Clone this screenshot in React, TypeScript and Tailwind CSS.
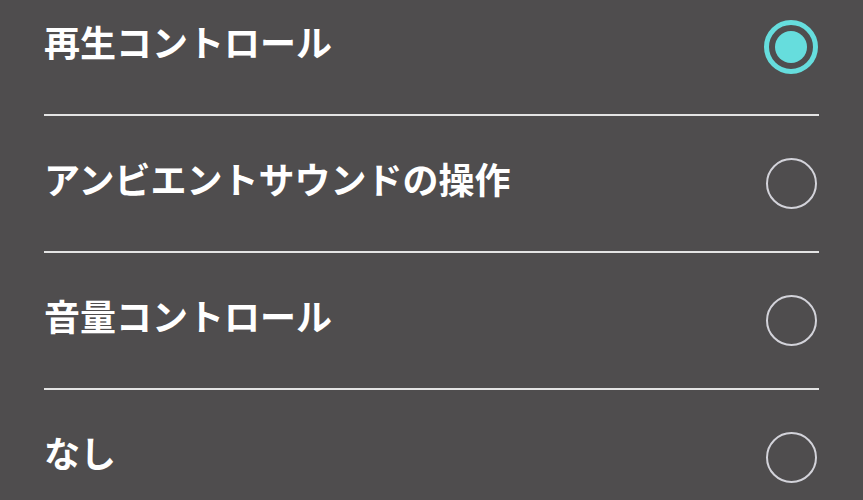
import React from "react";

const options = [
  { label: "再生コントロール", selected: true },
  { label: "アンビエントサウンドの操作", selected: false },
  { label: "音量コントロール", selected: false },
  { label: "なし", selected: false },
];

const Radio = ({ selected }: { selected: boolean }) =>
  selected ? (
    <div className="flex h-[54px] w-[54px] items-center justify-center rounded-full border-[5px] border-[#66dddd]">
      <div className="h-[32px] w-[32px] rounded-full bg-[#66dddd]"></div>
    </div>
  ) : (
    <div className="h-[51px] w-[51px] rounded-full border-[2.5px] border-[#d3d3da]"></div>
  );

export default function App() {
  return (
    <div
      className="h-[500px] w-[863px] overflow-hidden bg-[#4f4d4e]"
      style={{ fontFamily: '"Noto Sans CJK JP", "Noto Sans", sans-serif' }}
    >
      <div className="-mt-[21px] px-[44px]">
        {options.map((o, i) => (
          <div key={i}>
            <div className="flex h-[135px] items-center justify-between pr-[1px]">
              <span className="-mt-[11px] text-[36px] font-bold leading-none text-white">
                {o.label}
              </span>
              <div className="flex w-[54px] justify-center">
                <Radio selected={o.selected} />
              </div>
            </div>
            {i < options.length - 1 && <div className="h-[2px] bg-[#e4e4e4]"></div>}
          </div>
        ))}
      </div>
    </div>
  );
}
